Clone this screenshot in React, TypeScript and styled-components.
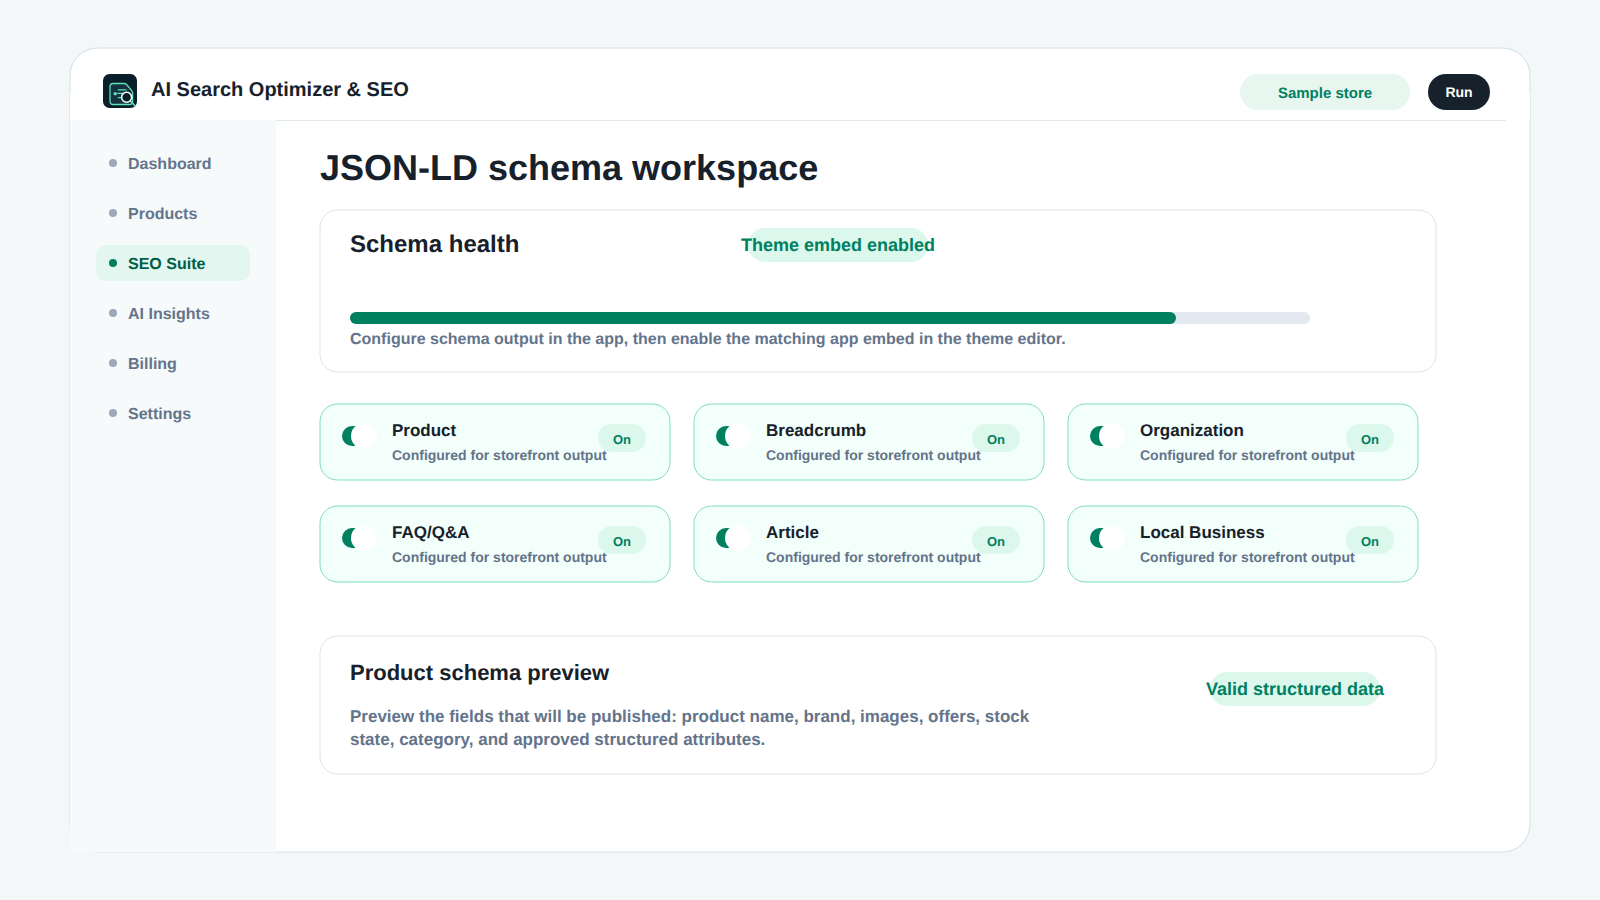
import React from "react";
import styled, { createGlobalStyle, css } from "styled-components";

const GlobalStyle = createGlobalStyle`
  *, *::before, *::after { box-sizing: border-box; }
  body {
    margin: 0;
    background: #f3f7f8;
    color: #17212b;
    font-family: "Liberation Sans", Arial, sans-serif;
    font-weight: 700;
    text-rendering: geometricPrecision;
  }
  h1, h2, h3, p, ul { margin: 0; padding: 0; font-weight: 700; }
`;

/* Hairline centred on the edge of its box, half inside and half outside. */
const hairline = css<{ $line: string; $fill: string; $radius: number }>`
  position: relative;
  isolation: isolate;
  &::before {
    content: "";
    position: absolute;
    z-index: -1;
    top: 0;
    left: 0;
    width: calc(100% + 1px);
    height: calc(100% + 1px);
    transform: translate(-0.5px, -0.5px);
    border: 1px solid ${(p) => p.$line};
    border-radius: ${(p) => p.$radius}px;
    background: ${(p) => p.$fill};
  }
`;

const Page = styled.div`
  width: 1600px;
  height: 900px;
  padding: 48px 70px;
  background: #f3f7f8;
`;

const Frame = styled.div`
  ${hairline}
  height: 804px;
  display: flex;
  flex-direction: column;
`;

const Header = styled.header`
  height: 72px;
  flex: none;
  display: flex;
  align-items: flex-start;
  padding: 26px 40px 0 33px;
  background: linear-gradient(transparent 44px, #fff 44px);
`;

const Logo = styled.svg`
  width: 34px;
  height: 34px;
  flex: none;
`;

const AppName = styled.div`
  margin: 5px auto 0 14px;
  font-size: 20px;
  line-height: 23px;
`;

const HeaderPill = styled.div<{ $dark?: boolean }>`
  width: ${(p) => (p.$dark ? 62 : 170)}px;
  height: 36px;
  margin-left: ${(p) => (p.$dark ? 18 : 0)}px;
  padding-top: ${(p) => (p.$dark ? 10 : 11)}px;
  border-radius: 18px;
  background: ${(p) => (p.$dark ? "#17212b" : "#e7f7f0")};
  color: ${(p) => (p.$dark ? "#fff" : "#008060")};
  font-size: ${(p) => (p.$dark ? 14 : 15)}px;
  line-height: ${(p) => (p.$dark ? 16 : 18)}px;
  text-align: center;
`;

const Body = styled.div`
  flex: 1;
  display: flex;
`;

const Sidebar = styled.nav`
  width: 206px;
  padding: 25px 26px;
  background: #f6fafb;
  display: flex;
  flex-direction: column;
  gap: 14px;
`;

const NavItem = styled.div<{ $active?: boolean }>`
  height: 36px;
  display: flex;
  align-items: center;
  gap: 11px;
  padding-left: 13px;
  border-radius: 10px;
  background: ${(p) => (p.$active ? "#e3f6ef" : "transparent")};
  color: ${(p) => (p.$active ? "#005e46" : "#64748b")};
  font-size: 16px;
  line-height: 18px;
  &::before {
    content: "";
    width: 8px;
    height: 8px;
    border-radius: 50%;
    background: ${(p) => (p.$active ? "#008060" : "#9aa8b8")};
  }
`;

const NavLabel = styled.span`
  padding-top: 4px;
`;

const Main = styled.main`
  flex: 1;
`;

const Divider = styled.div`
  width: 1230px;
  height: 1px;
  background: #e2e8f0;
`;

const Content = styled.div`
  width: 1160px;
  padding: 26px 0 0 44px;
`;

const Title = styled.h1`
  font-size: 36px;
  line-height: 41px;
  margin-bottom: 22px;
`;

const Panel = styled.section<{ $height: number }>`
  ${hairline}
  height: ${(p) => p.$height}px;
  padding: 0 30px;
`;

const HealthHead = styled.div`
  display: flex;
  padding-top: 18px;
`;

const HealthTitle = styled.h2`
  width: 398px;
  padding-top: 3px;
  font-size: 24px;
  line-height: 28px;
`;

const StatusPill = styled.span<{ $width: number }>`
  width: ${(p) => p.$width}px;
  height: 34px;
  flex: none;
  display: flex;
  justify-content: center;
  padding-top: 7px;
  border-radius: 17px;
  background: #dcf8ec;
  color: #008060;
  font-size: 18px;
  line-height: 20px;
  white-space: nowrap;
`;

const Track = styled.div`
  width: 960px;
  height: 12px;
  margin-top: 50px;
  border-radius: 6px;
  background: #e4e9f1;
`;

const Fill = styled.div`
  height: 12px;
  border-radius: 6px;
  background: #008060;
`;

const HealthNote = styled.p`
  margin-top: 7px;
  color: #64748b;
  font-size: 16px;
  line-height: 18px;
`;

const SchemaGrid = styled.div`
  display: grid;
  grid-template-columns: repeat(3, 350px);
  grid-auto-rows: 76px;
  gap: 26px 24px;
  margin: 32px 0 54px;
`;

const SchemaCard = styled.article`
  ${hairline}
  display: flex;
  align-items: flex-start;
  padding-left: 22px;
`;

const Toggle = styled.span`
  width: 35px;
  height: 20px;
  flex: none;
  display: flex;
  align-items: center;
  justify-content: flex-end;
  margin: 22px 15px 0 0;
  border-radius: 10px;
  background: linear-gradient(90deg, #008060 20px, transparent 20px);
  &::after {
    content: "";
    width: 26px;
    height: 26px;
    flex: none;
    border-radius: 50%;
    background: #fff;
  }
`;

const Copy = styled.div`
  position: relative;
  z-index: 1;
  width: 206px;
  padding-top: 17px;
  white-space: nowrap;
`;

const SchemaName = styled.h3`
  font-size: 17px;
  line-height: 19px;
`;

const SchemaNote = styled.p`
  margin-top: 7px;
  color: #64748b;
  font-size: 14px;
  line-height: 16px;
`;

const OnPill = styled.span`
  width: 48px;
  height: 28px;
  margin-top: 20px;
  padding-top: 8px;
  border-radius: 14px;
  background: #dcf8ec;
  color: #008060;
  font-size: 13px;
  line-height: 15px;
  text-align: center;
`;

const PreviewBody = styled.div`
  display: flex;
`;

const PreviewCopy = styled.div`
  width: 860px;
  padding-top: 24px;
`;

const PreviewTitle = styled.h2`
  font-size: 22px;
  line-height: 25px;
`;

const PreviewText = styled.p`
  width: 700px;
  margin-top: 20px;
  color: #64748b;
  font-size: 17px;
  line-height: 23px;
`;

const PreviewStatus = styled.div`
  padding-top: 36px;
`;

const navItems = ["Dashboard", "Products", "SEO Suite", "AI Insights", "Billing", "Settings"];
const schemas = ["Product", "Breadcrumb", "Organization", "FAQ/Q&A", "Article", "Local Business"];
const health = 86;

const AppLogo = () => (
  <Logo viewBox="0 0 34 34" fill="none">
    <rect width="34" height="34" rx="6.5" fill="#0b1f2a" />
    <path
      d="M10.3 9.5H21.3Q22.6 9.5 23.5 10.5L28.6 16.3Q29.6 17.5 29.6 19V27.2Q29.6 30.5 26.3 30.5H10.3Q7 30.5 7 27.2V12.8Q7 9.5 10.3 9.5Z"
      fill="#15333f"
      stroke="#5fe0bb"
      strokeWidth="1.3"
    />
    <circle cx="12.2" cy="19.7" r="1.7" fill="#5fe0bb" />
    <path d="M15.3 15.8H23M14.8 19.4H20M15.3 23.6H19" stroke="#5fe0bb" strokeWidth="1.3" strokeLinecap="round" />
    <path d="M27.6 27.2L32.2 32" stroke="#5fe0bb" strokeWidth="1.7" strokeLinecap="round" />
    <circle cx="23.6" cy="23.2" r="5" fill="#0b1f2a" stroke="#fff" strokeWidth="1.5" />
  </Logo>
);

export default function App() {
  return (
    <>
      <GlobalStyle />
      <Page>
        <Frame $line="#d3dde8" $fill="#fff" $radius={28}>
          <Header>
            <AppLogo />
            <AppName>AI Search Optimizer &amp; SEO</AppName>
            <HeaderPill>Sample store</HeaderPill>
            <HeaderPill $dark>Run</HeaderPill>
          </Header>
          <Body>
            <Sidebar>
              {navItems.map((item) => (
                <NavItem key={item} $active={item === "SEO Suite"}>
                  <NavLabel>{item}</NavLabel>
                </NavItem>
              ))}
            </Sidebar>
            <Main>
              <Divider />
              <Content>
                <Title>JSON-LD schema workspace</Title>
                <Panel $height={162} $line="#d9e4ec" $fill="#fff" $radius={18}>
                  <HealthHead>
                    <HealthTitle>Schema health</HealthTitle>
                    <StatusPill $width={180}>Theme embed enabled</StatusPill>
                  </HealthHead>
                  <Track>
                    <Fill style={{ width: `${health}%` }} />
                  </Track>
                  <HealthNote>
                    Configure schema output in the app, then enable the matching app embed in the theme editor.
                  </HealthNote>
                </Panel>
                <SchemaGrid>
                  {schemas.map((name) => (
                    <SchemaCard key={name} $line="#7fddbc" $fill="#f3fffb" $radius={18}>
                      <Toggle />
                      <Copy>
                        <SchemaName>{name}</SchemaName>
                        <SchemaNote>Configured for storefront output</SchemaNote>
                      </Copy>
                      <OnPill>On</OnPill>
                    </SchemaCard>
                  ))}
                </SchemaGrid>
                <Panel $height={138} $line="#d9e4ec" $fill="#fff" $radius={18}>
                  <PreviewBody>
                    <PreviewCopy>
                      <PreviewTitle>Product schema preview</PreviewTitle>
                      <PreviewText>
                        Preview the fields that will be published: product name, brand, images, offers, stock
                        state, category, and approved structured attributes.
                      </PreviewText>
                    </PreviewCopy>
                    <PreviewStatus>
                      <StatusPill $width={170}>Valid structured data</StatusPill>
                    </PreviewStatus>
                  </PreviewBody>
                </Panel>
              </Content>
            </Main>
          </Body>
        </Frame>
      </Page>
    </>
  );
}
